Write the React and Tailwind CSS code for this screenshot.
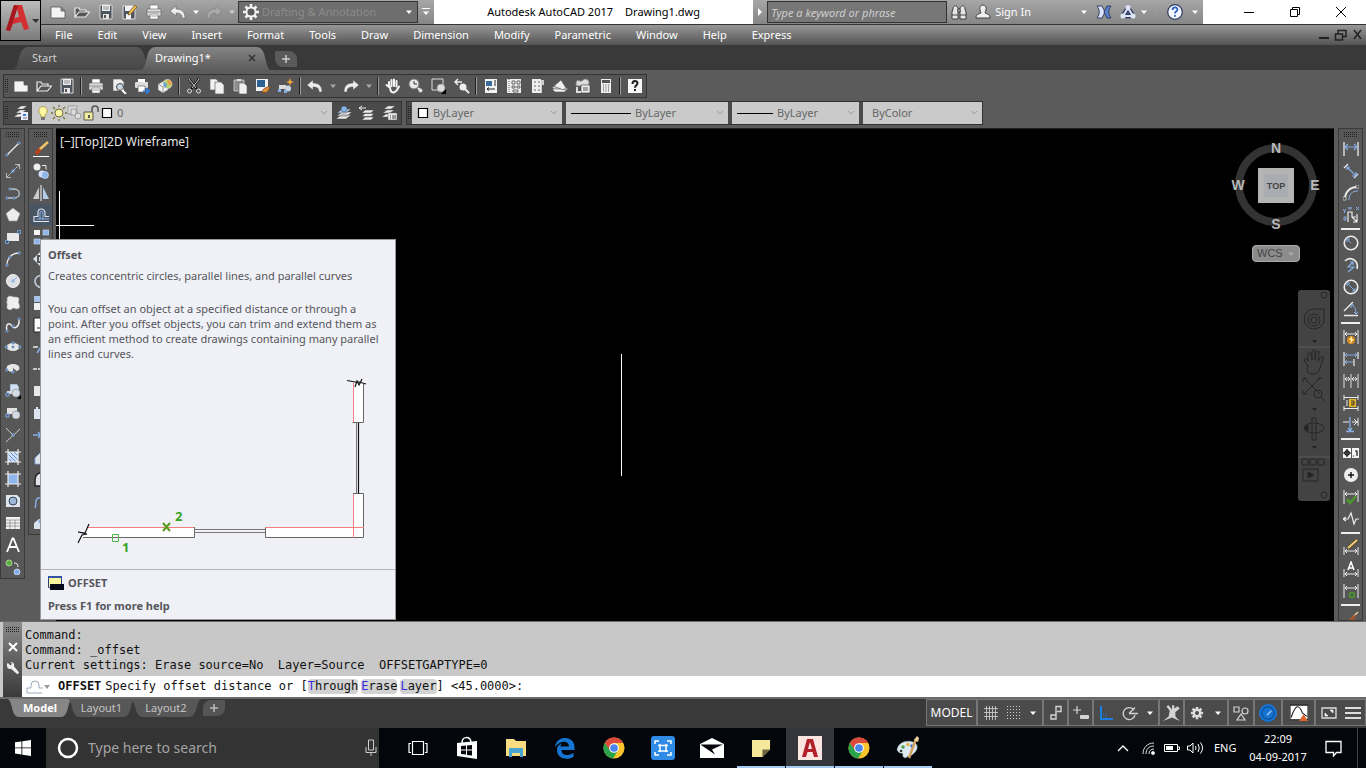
import React from 'react';

const L = '#ececec';
const B = '#86aee6';
const D = '#3a3a3a';

// All toolbar glyphs live on a 16x16 grid
const icons = {
  new: <path d="M1 3h10l4 4v7H1z M11 3v4h4" fill="#f4f4f4" stroke="#555" strokeWidth=".8" />,
  open: <path d="M1 13V4h4l1 2h6v2M1 13l4-5h10.5l-4 5z" fill="#555" stroke={L} strokeWidth="1.2" />,
  save: <g><path d="M2 1h12v14H2z" fill="#4d5560" stroke="#d5d5d5" /><path d="M4 1h8v6H4z" fill="#f2f2f2" /><path d="M5 10h6v5H5z" fill="#e5e5e5" /><path d="M6 11h2v3H6z" fill="#555" /><path d="M5 3h6M5 5h6" stroke="#888" /></g>,
  saveas: <g><path d="M1 2h12v13H1z" fill="#4d5560" stroke="#e0e0e0" /><path d="M3 2h8v5H3zM4 10h5v5H4z" fill="#f2f2f2" /><path d="M6 11l1-3 6-7 2 2-6 7z" fill="#f0bb52" stroke="#6b4a16" strokeWidth=".7" /></g>,
  print: <g><path d="M4 1h8v5H4z" fill="#fff" stroke="#666" strokeWidth=".6" /><rect x="1" y="5" width="14" height="7" rx="1" fill="#dedede" stroke="#555" strokeWidth=".6" /><path d="M1 8h14" stroke="#888" /><path d="M4 10h8v5H4z" fill="#fff" stroke="#666" strokeWidth=".6" /><path d="M5 12h6" stroke="#999" /></g>,
  preview: <g><path d="M2 1h8l3 3v9H2z" fill="#eee" stroke="#555" strokeWidth=".6" /><circle cx="9" cy="9" r="3.5" fill="#c9d4df" stroke="#444" /><path d="M11 12l4 4" stroke="#fff" strokeWidth="2" /></g>,
  publish: <g><path d="M4 1h7v4H4z" fill="#fff" /><rect x="1" y="4" width="13" height="6" rx="1" fill="#ddd" /><path d="M4 8h7v6H4z" fill="#fff" stroke="#555" strokeWidth=".6" /><path d="M9 13h6m-3-3l3 3-3 3" stroke="#2f7ee0" strokeWidth="1.6" fill="none" /></g>,
  cube: <g><path d="M1 6l6-3 4 2v7l-5 3-5-3z" fill="#f0f0f0" stroke="#666" strokeWidth=".6" /><path d="M6 9v6M1 6l5 3 5-3" stroke="#999" fill="none" /><circle cx="10.5" cy="6" r="4.5" fill="#b9d26a" stroke="#eee" strokeWidth=".6" /><path d="M10.5 1.5a4.5 4.5 0 0 1 4 6l-4-2z" fill="#e8a04c" /><path d="M7 4l3 2-1 4a4 4 0 0 1-2-6z" fill="#6a9fd8" /></g>,
  cut: <g fill="none"><path d="M3 1l8 10M13 1L5 11" stroke="#111" strokeWidth="2.2" /><path d="M3 1l7 9M13 1L6 10" stroke="#e8e8e8" strokeWidth=".9" /><circle cx="3.5" cy="13" r="2" stroke="#ddd" /><circle cx="12.5" cy="13" r="2" stroke="#ddd" /></g>,
  copy: <g fill="#f1f1f1" stroke="#666" strokeWidth=".7"><path d="M1 1h6l3 3v8H1z" /><path d="M6 4h6l3 3v9H6z" /></g>,
  paste: <g strokeWidth=".7"><path d="M2 2h10v11H2z" fill="#8d8d8d" stroke="#ddd" /><path d="M5 1h4v2H5z" fill="#ddd" /><path d="M7 5h5l3 3v8H7z" fill="#f1f1f1" stroke="#666" /></g>,
  match: <g><path d="M1 1h12v12H1z" fill="#f2f2f2" /><path d="M2 2h8v7H2z" fill="#2f6292" /><path d="M7 14c2-5 4-4 8-6-1 5-3 8-8 6z" fill="#d98d3a" stroke="#733c12" strokeWidth=".7" /></g>,
  block: <g><path d="M1 7h7v4H1z" fill="#ddd" /><circle cx="10" cy="10.5" r="3" fill="#ccd7e6" /><path d="M0 11h3v3H0zM6 12h3v3H6z" fill="#86aee6" /><path d="M12 0l1 3 3 1-3 1-1 3-1-3-3-1 3-1z" fill="#f5a938" /></g>,
  undo: <path d="M0 7l6-5v3c6 0 9 3 9 9h-3c0-4-2-5-6-5v3z" fill={L} stroke="#555" strokeWidth=".5" />,
  redo: <path d="M16 7l-6-5v3C4 5 1 8 1 14h3c0-4 2-5 6-5v3z" fill={L} stroke="#555" strokeWidth=".5" />,
  redoDim: <path d="M16 7l-6-5v3C4 5 1 8 1 14h3c0-4 2-5 6-5v3z" fill="#aaa" stroke="#777" strokeWidth=".5" />,
  pan: <path d="M4 9V4m2.5 4V2M9 8V1.5m2.5 7V3M4 9L1.5 7M5 9c0 4 1 5 3 5.5 3 0 4-2.5 6-6" fill="none" stroke="#f5f5f5" strokeWidth="2" strokeLinecap="round" />,
  zoom: <g><circle cx="6" cy="6" r="5" fill="#e9e9e9" stroke="#777" /><path d="M6 3v3h3" stroke="#333" fill="none" /><path d="M10 10l2 2" stroke="#eee" strokeWidth="2" /><circle cx="12.5" cy="12.5" r="2" fill="#ddd" /></g>,
  zoomwin: <g><path d="M1 1h11v11H1z" fill="none" stroke="#ddd" /><circle cx="10" cy="10" r="4" fill="#ddd" stroke="#888" strokeWidth=".6" /><path d="M15 11v5h-5z" fill="#000" /></g>,
  zoomprev: <g><path d="M1 4h7M4 1L1 4l3 3" stroke={L} fill="none" strokeWidth="1.5" /><circle cx="9" cy="9" r="3.5" fill="#eee" /><path d="M11 11l4 4" stroke={L} strokeWidth="2" /></g>,
  props: <g><path d="M2 1h12v14H2z" fill="#f3f3f3" /><path d="M3 3h6v5H3z" fill="#396b9a" /><path d="M11 3h2M11 5h2M11 7h2M4 11h8M6 9.5L4 11l2 1.500" stroke="#222" fill="none" /></g>,
  dc: <g><path d="M1 1h14v14H1z" fill="#eee" /><path d="M3 1v14" stroke="#666" strokeDasharray="1 1" /><path d="M6 3h3v3H6zM11 3h3v3h-3zM6 8h3v2H6zM11 8h3v2h-3zM7 12h5v2H7z" fill="none" stroke="#333" strokeWidth=".7" /></g>,
  palette: <g><path d="M3 1h9v14H3z" fill="#eee" /><path d="M12 2h3v5h-2v8h-1z" fill="#ccc" /><path d="M5 3h2v2H5zM9 3h2v2H9zM5 7h2v2H5zM9 7h2v2H9zM5 11h2v2H5zM9 11h2v2H9z" fill="#aaa" /></g>,
  sheet: <g stroke="#555" strokeWidth=".6"><path d="M0 9l8-3 8 5-4 3H4z" fill="#ccc" /><path d="M2 8l7-6 5 8-3 2z" fill="#eee" /><path d="M0 11h8l6 1-1 2H3z" fill="#f4f4f4" /></g>,
  markup: <g><path d="M1 4c2-4 4 1 7-2 2-2 4-1 6 1v5H1z" fill="#ddd" stroke="#777" /><path d="M6 7h9v8H6z" fill="#eee" stroke="#444" strokeWidth=".7" /><path d="M8 10h5M8 12h5" stroke="#555" /><path d="M2 9v5h4" stroke="#ddd" fill="none" strokeWidth="2" /></g>,
  calc: <g><path d="M3 1h10v14H3z" fill="#eee" /><path d="M4 2h8v3H4z" fill="#555" /><path d="M5 7h6M5 9h6M5 11h6M5 13h6" stroke="#555" strokeDasharray="1 1.5" strokeWidth="1.2" /></g>,
  help: <g><path d="M1 1h14v14H1z" fill="#f6f6f6" /><path d="M5.5 6c0-4 5-3.5 5-.8 0 2-2.5 2-2.5 4.500M8 11v2" fill="none" stroke="#222" strokeWidth="2" /></g>,
  layers: <g><path d="M4 4l4-3h6l-4 3zM3 8l4-3h6l-4 3zM1 12l4-3h6l-4 3z" fill={L} stroke="#555" strokeWidth=".4" /><path d="M8 7h7v8H8z" fill="#eef" /><path d="M10 9h3v2h-3z" fill="#3c7fc9" /><path d="M10 13h4" stroke="#777" /></g>,
  layersBlue: <g stroke="#444" strokeWidth=".5"><path d="M0 14l5-4h10l-5 4zM1 11l5-4h10l-5 4z" fill={L} /><path d="M1 8l5-4h9l-5 4z" fill="#a9cdf5" /><circle cx="8" cy="4" r="3" fill="#86b5ec" /></g>,
  layersBack: <g><path d="M3 8l3-3h9l-3 3zM3 11.500l3-3h9l-3 3zM3 15l3-3h9l-3 3z" fill={L} stroke="#444" strokeWidth=".5" /><path d="M0 3h7M3 1L0 3l3 2" stroke={L} fill="none" /></g>,
  layersState: <g><path d="M2 4l4-3h7L9 4zM1 8l4-3h7L8 8zM0 12l4-3h7l-4 3z" fill={L} stroke="#555" strokeWidth=".4" /><path d="M6 8h9v7H6z" fill="#eee" stroke="#555" strokeWidth=".5" /><path d="M8 11h1m1 0h4M8 13h1m1 0h4" stroke="#444" /></g>,
  bulb: <g><path d="M6 10C2 7 4 1.500 8 1.500s6 5.500 2 8.500v2H6z" fill="#fbf6a2" stroke="#a59133" strokeWidth=".8" /><path d="M6 12h4v3H6z" fill="#777" /></g>,
  sun: <g><circle cx="8" cy="8" r="4" fill="#fbf6a2" stroke="#6f6a3c" /><path d="M8 0v2M8 14v2M0 8h2M14 8h2M2 2l2 2M12 12l2 2M14 2l-2 2M4 12l-2 2" stroke="#777236" strokeWidth="1.3" /></g>,
  vp: <g fill="#ddd" stroke="#9a9a9a"><path d="M1 1h9v8H1z" /><path d="M4 4h5v6H4z" /><circle cx="11" cy="11" r="3" /></g>,
  unlock: <g><path d="M9 7V4c0-4 6-4 6 0v3" fill="none" stroke="#555" strokeWidth="1.5" /><path d="M1 7h9v8H1z" fill="#f2ec9c" stroke="#555" /><path d="M5 10h2v3H5z" fill="#555" /></g>,
  swatch: <path d="M3.5 3.5h9v9h-9z" fill="#fff" stroke="#000" strokeWidth="1.2" />,

  // draw
  line: <g><path d="M2 14L14 2" stroke={L} strokeWidth="1.3" /><path d="M1 13h2v2H1zM13 1h2v2h-2z" fill="#456" stroke={B} strokeWidth=".7" /></g>,
  xline: <g><path d="M1 15L15 1M10 1.500h4.500V6M1.500 10v4.500H6" stroke="#b8b8b8" fill="none" /><path d="M7 7h2v2H7z" fill="#456" stroke={B} /><path d="M5 11L11 5" stroke={B} strokeWidth=".7" /></g>,
  pline: <g><path d="M2 13h7c7 0 7-9 0-9H4" fill="none" stroke="#bcc7d4" strokeWidth="1.3" /><path d="M1 12h2v2H1zM8 12h2v2H8zM4 3h2v2H4z" fill="#456" stroke={B} strokeWidth=".7" /></g>,
  polygon: <path d="M8 1l7 5.5L12 14H4L1 6.500z" fill="#ececec" stroke="#999" strokeWidth=".6" />,
  rect: <g><path d="M2 4h12v8H2z" fill="#e9e9e9" /><path d="M.5 11.500h3v3h-3zM12.500 1.500h3v3h-3z" fill="#456" stroke={B} strokeWidth=".8" /></g>,
  arc: <g><path d="M2 14C2 7 7 2 14 2" fill="none" stroke={L} strokeWidth="1.3" /><path d="M1 13h2v2H1zM4 5h2v2H4zM13 1h2v2h-2z" fill="#456" stroke={B} strokeWidth=".8" /></g>,
  circle: <g><circle cx="8" cy="8" r="6.5" fill="#dde1e6" stroke="#f4f4f4" /><path d="M7 7h2v2H7zM9 7l3-3" fill="none" stroke={B} /></g>,
  cloud: <path d="M3 2c2-2 4 0 6 0s5 0 5 2-1 3 0 5 1 5-2 5-3-2-5 0-6 0-5-3-1-3 0-5-1-3 1-4z" fill="#eee" stroke="#aaa" strokeWidth=".6" />,
  spline: <g><path d="M2 14C0 5 5 6 7 9s8 2 7-7" fill="none" stroke={L} strokeWidth="1.5" /><path d="M1 13h2v2H1zM7 8h2v2H7zM13 1h2v2h-2z" fill="#456" stroke={B} strokeWidth=".7" /></g>,
  ellipse: <g><ellipse cx="8" cy="8" rx="6.5" ry="4" fill="#e6e6e6" /><path d="M.5 7h2v2h-2zM13.500 7h2v2h-2zM7 3h2v2H7zM7 7h2v2H7z" fill="#456" stroke={B} strokeWidth=".8" /></g>,
  earc: <g><ellipse cx="8" cy="7" rx="6.5" ry="4" fill="#e6e6e6" /><path d="M8 7l6 5H8z" fill="#5b5b5b" /><path d="M1 8h2v2H1zM7 10h2v2H7z" fill="#456" stroke={B} strokeWidth=".8" /></g>,
  insert: <g><path d="M5 1h7l2 3v5H5z" fill="#cfe0f5" stroke="#567" strokeWidth=".5" /><path d="M2 8h6v3H2z" fill="#ddd" /><circle cx="11" cy="10" r="4" fill="#d5dbe3" stroke="#777" strokeWidth=".5" /><path d="M1 10h3v3H1z" fill="#456" stroke={B} /><path d="M16 12v4h-4z" fill="#000" /></g>,
  mkblock: <g><path d="M2 3h10v6H2z" fill="#e2e2e2" /><circle cx="11" cy="10" r="4" fill="#d5dbe3" stroke="#777" strokeWidth=".5" /><path d="M1 9h3v3H1z" fill="#456" stroke={B} /></g>,
  point: <g><path d="M1 1l7 7M15 2L1 15" stroke="#ccc" /><path d="M7 7h2v2H7z" fill="#456" stroke={B} /></g>,
  hatch: <g><path d="M3 3h10v10H3z" fill="#cfe0f8" /><path d="M3 9l4 4M3 5l8 8M5 3l8 8M9 3l4 4" stroke="#5f8fd0" /><path d="M3 0v16M13 0v16M0 3h16M0 13h16" stroke={L} strokeWidth="1.2" /></g>,
  gradient: <g><path d="M3 3h10v10H3z" fill="#8fb7ee" /><path d="M3 0v16M13 0v16M0 3h16M0 13h16" stroke={L} strokeWidth="1.2" /></g>,
  region: <g><path d="M1 2h11l3 3v9H1z" fill="#dfe5ec" /><circle cx="8" cy="8" r="4" fill="#9fb7d4" stroke="#345" /></g>,
  table: <g><path d="M1 2h14v12H1z" fill="#f3f3f3" /><path d="M1 5h14M1 8h14M1 11h14M5 5v9M10 5v9" stroke="#888" strokeWidth=".8" /></g>,
  text: <path d="M2 15L7.500 1.500h1L14 15M4 10h8" fill="none" stroke="#fff" strokeWidth="1.8" />,
  addsel: <g><circle cx="4" cy="4" r="3" fill="#5cae3c" stroke="#cde8b8" strokeWidth=".7" /><circle cx="12" cy="13" r="3" fill="#86aee6" stroke="#e0ecff" strokeWidth=".7" /><path d="M9 4c3 0 4 1 4 4" stroke={L} fill="none" /></g>,

  // modify
  erase: <g><path d="M15 1L6 9" stroke="#f1c46a" strokeWidth="2.5" /><path d="M7 8L3 13" stroke="#b4421c" strokeWidth="4" /><path d="M0 15.500h16" stroke="#fff" /></g>,
  copyobj: <g><circle cx="4" cy="4" r="3.5" fill="#eee" /><path d="M9 2.500h4v4" fill="none" stroke={L} /><circle cx="9" cy="11" r="3.5" fill="#cfe0f8" /><circle cx="12" cy="12" r="3.5" fill="#8fb4e8" stroke="#dbe8fb" strokeWidth=".6" /></g>,
  mirror: <g><path d="M6 2v12H0z" fill="#ccc" /><path d="M10 2v12h6z" fill="#b5cbe8" /><path d="M8 0v16" stroke="#fff" /></g>,
  offset: <g fill="none" strokeWidth="1.1"><path d="M16 14.500H1v-5h4V5.500a3.500 3.500 0 0 1 7 0v4h4" stroke="#dfe8f5" /><path d="M16 12H3.500M7 12V6a1.500 1.500 0 0 1 3 0v6" stroke={B} /></g>,
  array: <g><path d="M1 1h6v5H1z" fill="#f4f4f4" /><path d="M10 1h6v5h-6zM1 10h6v5H1zM10 10h6v5h-6z" fill="#8fb4e8" stroke="#cfe0f8" strokeWidth=".6" /></g>,
  move: <path d="M0 8l4-4v8zM8 0l4 4H4zM16 8l-4 4V4zM8 16l-4-4h8zM6 6h4v4H6z" fill="#d9dee6" />,
  rotate: <path d="M13 5A6 6 0 1 0 14 9M14 1v5H9" fill="none" stroke="#bcc7d4" strokeWidth="1.7" />,
  scale: <g><path d="M1 1h14v6H1z" fill="#a9c3e6" /><path d="M1 8h14v7H1z" fill="#f0f0f0" /></g>,
  stretch: <g><path d="M1 1h14v14H1z" fill="#fff" stroke="#222" /><path d="M4 11h6" stroke="#222" /></g>,
  trim: <g><path d="M0 8h5" stroke={L} strokeWidth="1.5" /><path d="M4 14L12 2" stroke={B} strokeWidth="1.5" /></g>,
  extend: <path d="M0 8h4m1 0h3m3 0h4" stroke={L} strokeWidth="1.5" />,
  brk: <path d="M1 3h14v10H1z" fill="#e8e8e8" />,
  brk2: <path d="M1 4h2V2h2v2h10v10H1z" fill="#dbe4f0" />,
  join: <path d="M0 8h8M5 5l3 3-3 3" stroke={B} strokeWidth="1.5" fill="none" />,
  chamfer: <path d="M2 15V9l8-8h5v14z" fill="#dfe2e6" stroke={B} strokeWidth=".8" />,
  fillet: <path d="M2 15V9q0-8 10-8h3v14z" fill="#dfe2e6" stroke="#222" strokeWidth="1.5" />,
  blend: <path d="M2 15c2-3-1-8 3-10h8" fill="none" stroke={B} strokeWidth="1.5" />,
  explode: <g><path d="M1 8l5-4h8v10H1z" fill="#d9e3f0" /><path d="M5 6l4-4v10z" fill="#8fb4e8" /></g>,

  // dimension
  dlin: <g><path d="M1 1v14M15 1v14" stroke={L} strokeWidth="1.3" /><path d="M2 6h12M5 3L2 6l3 3M11 3l3 3-3 3" fill="none" stroke={B} strokeWidth="1.2" /></g>,
  dali: <g><path d="M1 5l4-4M11 15l4-4" stroke={L} strokeWidth="1.3" /><path d="M4 4l9 9M4 7V4h3M9 13h4V9" fill="none" stroke={B} strokeWidth="1.2" /></g>,
  darc: <g><path d="M2 14C2 7 7 2 14 2" fill="none" stroke={L} strokeWidth="2" /><path d="M6 15c0-6 3-9 9-9" fill="none" stroke={B} /><path d="M0 12h3v3H0zM13 0h3v3h-3z" fill={D} stroke={L} strokeWidth=".7" /></g>,
  dord: <g><path d="M5 15V5h4v5h4M9 10l5 5M14 7v8h-4" fill="none" stroke={L} strokeWidth="1.2" /><path d="M0 2l1.500 2L3 2M1.500 4v2M13 0l3 3M16 0l-3 3M1 10h2v3H1zM6 0h2v2H6z" fill="none" stroke={B} /></g>,
  drad: <g><circle cx="8" cy="8" r="6.8" fill="none" stroke={L} strokeWidth="1.6" /><path d="M4 4l4 4M4 7V4h3" fill="none" stroke={B} /></g>,
  djog: <g><path d="M2 4c5-5 14-1 12 8" fill="none" stroke={L} strokeWidth="1.6" /><path d="M10 5L5 10h6L5 15M7 5h3v3" fill="none" stroke={B} strokeWidth="1.2" /></g>,
  ddia: <g><circle cx="8" cy="8" r="6.8" fill="none" stroke={L} strokeWidth="1.6" /><path d="M4 4l8 8M4 7V4h3M9 12h3V9" fill="none" stroke={B} /></g>,
  dang: <g><path d="M10 1L1 10M1 14.500h14" fill="none" stroke={L} strokeWidth="1.4" /><path d="M9 4c3 2 4 5 4 9M8 7V4h3M11 11l2 2 2-2" fill="none" stroke={B} /></g>,
  dquick: <g><path d="M1 1v14M15 1v14M2 5h12M4 3L2 5l2 2M12 3l2 2-2 2" fill="none" stroke={L} /><circle cx="8" cy="11" r="4" fill="#d98a20" /><path d="M9 7l-3 4h2l-1 4 4-5H9z" fill="#fff3b0" /></g>,
  dbase: <g><path d="M1 1v14M11 8v7M15 1v7" stroke={L} strokeWidth="1.2" /><path d="M2 4h12M2 11h8M4 2L2 4l2 2M4 9l-2 2 2 2M12 2l2 2-2 2" stroke={B} fill="none" /></g>,
  dcont: <path d="M1 1v14M8 1v14M15 1v14M2 6h5M9 6h5M4 4L2 6l2 2M12 4l2 2-2 2M5 4l2 2-2 2M11 4L9 6l2 2" fill="none" stroke={L} strokeWidth=".9" />,
  dspace: <g><path d="M1 0v5M15 0v5M1 11v5M15 11v5M1 2.500h14M1 13.500h14M4 5v6" stroke={L} fill="none" /><path d="M6 4h7v8H6z" fill="#e7b92d" /><path d="M8 6h3v4H8M8 8h3" stroke="#433" fill="none" /></g>,
  dbreak: <g><path d="M0 5h6M9 5h6M11 2l3 3-3 3M15 1v8" stroke={L} fill="none" /><path d="M7 0v13M3 14.500h8M5 11l2 3 2-3" stroke={B} fill="none" strokeWidth="1.3" /></g>,
  dtol: <g><path d="M0 3h8v10H0zM9 3h7v10H9z" fill="#f4f4f4" /><circle cx="4" cy="8" r="2.2" fill="none" stroke="#111" strokeWidth="1.2" /><path d="M4 4v8M0 8h8M10 11h1M12 6h2v5" stroke="#111" strokeWidth="1.2" fill="none" /></g>,
  dcen: <g><circle cx="8" cy="8" r="7" fill="#eee" /><path d="M8 5v6M5 8h6" stroke="#111" strokeWidth="1.4" /></g>,
  dinsp: <g><path d="M1 1v14M15 1v12M2 5h12M4 3L2 5l2 2M12 3l2 2-2 2" fill="none" stroke={L} /><path d="M4 10l3 4 6-7" fill="none" stroke="#4c9a2b" strokeWidth="2.5" /></g>,
  djogl: <path d="M0 8h5l3-6 3 11 2-5h3M3 6L0 8l3 2" fill="none" stroke={L} strokeWidth="1.2" />,
  dedit: <g><path d="M1 8v8M15 8v8M2 12h12M4 10l-2 2 2 2M12 10l2 2-2 2" fill="none" stroke={L} /><path d="M5 9l9-8" stroke="#5e451a" strokeWidth="3.4" /><path d="M5 9l9-8" stroke="#f2cf7c" strokeWidth="2" /></g>,
  dtedit: <g><path d="M1 8v8M15 8v8M2 13h12M4 11l-2 2 2 2M12 11l2 2-2 2" fill="none" stroke={L} /><path d="M5 9l3-8 3 8M6 7h4" fill="none" stroke="#fff" strokeWidth="1.5" /></g>,
  dupd: <g><path d="M1 1v14M15 1v14M2 5h12M4 3L2 5l2 2M12 3l2 2-2 2" fill="none" stroke={L} /><circle cx="9" cy="12" r="2.5" fill="none" stroke="#4c9a2b" strokeWidth="1.6" /></g>,
  dstyle: <g><path d="M15 1L7 9" stroke="#e8cf9a" strokeWidth="1.5" /><path d="M13 4c-3 0-6 3-9 8 5 0 8-2 9-8z" fill="#a0522d" /><path d="M1 9v6M15 9v6" stroke={L} /></g>,

  // status bar
  grid: <path d="M3.500 1v14M6.500 1v14M9.500 1v14M12.500 1v14M1 3.500h14M1 7.500h14M1 11.500h14" stroke="#d4d4d4" strokeWidth=".8" />,
  snap: <path d="M1 1.500h14M1 4.500h14M1 7.500h14M1 10.500h14M1 13.500h14" stroke="#cfcfcf" strokeDasharray="1 2" />,
  infer: <path d="M8 13V1.500h5v5H9M3 10h5v4H3z" fill="none" stroke="#d4d4d4" strokeWidth="1.4" />,
  dyn: <g><path d="M4 1v8M0 5h8" stroke="#d4d4d4" strokeWidth="1.2" /><rect x="7" y="10" width="9" height="4" rx="1" fill="#d4d4d4" /></g>,
  ortho: <g><path d="M3 1v13h12" fill="none" stroke="#1d7fe0" strokeWidth="2" /><path d="M3 9h5v5" fill="none" stroke="#1d7fe0" strokeDasharray="1 1" /></g>,
  polar: <g fill="none" stroke="#d4d4d4" strokeWidth="1.3"><path d="M12 5a6 6 0 1 0 1 5" /><path d="M7 8.500l6-6M7 8.500h9" /></g>,
  iso: <path d="M0 15l5-4 1-5-3-4 2-1 3 4V1h2v3l3-2 2 2-4 3v4l4 4-7-3z" fill="#d4d4d4" />,
  gear: <g><path d="M8 1v14M1 8h14M3 3l10 10M13 3L3 13" stroke="#dcdcdc" strokeWidth="3" /><circle cx="8" cy="8" r="5" fill="#dcdcdc" /><circle cx="8" cy="8" r="2.2" fill="#4b4b4b" /></g>,
  gearOpen: <g><path d="M8 0v16M0 8h16M2.500 2.500l11 11M13.500 2.500l-11 11" stroke="#f4f4f4" strokeWidth="2.6" /><circle cx="8" cy="8" r="5.500" fill="#f4f4f4" /><circle cx="8" cy="8" r="3.600" fill="#5c5c5c" /></g>,
  shapes: <g fill="none" stroke="#d4d4d4" strokeWidth="1.2"><path d="M1 2h5v5H1zM8 9l4 6H4z" /><circle cx="12" cy="6" r="3" /></g>,
  perf: <g><circle cx="8" cy="8" r="8" fill="#1673cf" /><circle cx="8" cy="8" r="5.5" fill="none" stroke="#0c4f93" /><path d="M7 10l4-4" stroke="#9cc6f2" strokeWidth="1.3" /></g>,
  graph: <g><path d="M0 1h16v13H0z" fill="#fff" stroke="#222" /><path d="M1 12C5 0 8 0 11 8l4 3" fill="none" stroke="#222" /><path d="M12 9l4 6H8z" fill="#d9622b" /></g>,
  full: <g><path d="M1 3h14v10H1z" fill="none" stroke="#ddd" strokeWidth="1.3" /><path d="M4 8v3h3zM12 8V5H9z" fill="#eee" stroke="#eee" strokeWidth=".8" /></g>,
  menu: <path d="M0 3h16M0 8h16M0 13h16" stroke="#ddd" strokeWidth="1.8" />,

  binoc: <g fill="#e6e6e6" stroke="#333" strokeWidth=".9"><path d="M2 5c0-4 4-4 5-1v11H1V8zM14 5c0-4-4-4-5-1v11h6V8z" /><path d="M1 11h6M9 11h6M7 5h2v3H7z" /></g>,
  user: <path d="M8 1C5 1 4.500 4 5 6c.5 2 1 2 1 3-2 1-5 1-5 5h14c0-4-3-4-5-5 0-1 .5-1 1-3 .5-2 0-5-3-5z" fill="#eee" stroke="#333" strokeWidth=".9" />,
  exchange: <g strokeWidth=".9" stroke="#27355c"><path d="M1 2h5l3 6-3 6H1c3-4 3-8 0-12z" fill="#dce6fa" /><path d="M15 2h-4L8 8l3 6h4c-3-4-3-8 0-12z" fill="#5c83cf" /></g>,
  a360: <g fill="none" stroke="#dfe6f5" strokeWidth="2"><path d="M8 4L3 12h10z" stroke="#2c3860" strokeWidth="4.5" strokeLinejoin="round" /><path d="M8 4L3 12h10z" /><circle cx="8" cy="3.5" r="1.600" /><circle cx="3" cy="12" r="1.600" /><circle cx="13" cy="12" r="1.600" /></g>,
  helpCircle: <g><circle cx="8" cy="8" r="7.3" fill="#f5f8ff" stroke="#2c3860" strokeWidth="1.2" /><path d="M5.5 6c0-3.5 5-3.2 5-.6 0 1.800-2.500 1.800-2.500 4M8 11v1.800" fill="none" stroke="#2c62c4" strokeWidth="1.8" /></g>,
  wrench: <path d="M2 2l3 3 2-2-2-2c4 0 5 3 4 5l6 7-2 2-7-6c-3 1-5-1-5-5z" fill="#eee" />,
};

const Icon = ({ name, size = 'size-4' }) => (
  <svg viewBox="0 0 16 16" className={`${size} shrink-0`} aria-hidden="true">{icons[name]}</svg>
);

const Caret = ({ color = '#fff' }) => (
  <svg viewBox="0 0 8 8" className="size-2 shrink-0" aria-hidden="true"><path d="M1 2.500h6L4 6z" fill={color} /></svg>
);

const Grip = ({ wide }) => wide ? (
  <svg viewBox="0 0 14 6" className="h-[6px] w-[14px] shrink-0" aria-hidden="true">
    <path d="M0 .5h14M0 2.500h14M0 4.500h14" stroke="#222" strokeDasharray="1 1" />
  </svg>
) : (
  <svg viewBox="0 0 3 14" className="mx-px h-[14px] w-[3px] shrink-0" aria-hidden="true">
    <path d="M.5 0v14M2.500 0v14" stroke="#222" strokeDasharray="1 1" />
  </svg>
);

const stdBar = ['new', 'open', 'save', '|', 'print', 'preview', 'publish', 'cube', '|', 'cut', 'copy', 'paste', 'match', 'block', '|',
  'undo', 'v', 'redo', 'v', '|', 'pan', 'zoom', 'zoomwin', 'zoomprev', '|', 'props', 'dc', 'palette', 'sheet', 'markup', 'calc', '|', 'help'];
const drawBar = ['line', 'xline', 'pline', 'polygon', 'rect', 'arc', 'circle', 'cloud', 'spline', 'ellipse', 'earc', 'insert', 'mkblock', 'point', 'hatch', 'gradient', 'region', 'table', 'text', 'addsel'];
const modifyBar = ['erase', 'copyobj', 'mirror', 'offset', 'array', 'move', 'rotate', 'scale', 'stretch', 'trim', 'extend', 'brk', 'brk2', 'join', 'chamfer', 'fillet', 'blend', 'explode'];
const dimBar = ['dlin', 'dali', 'darc', 'dord', '|', 'drad', 'djog', 'ddia', 'dang', '|', 'dquick', 'dbase', 'dcont', 'dspace', 'dbreak', '|', 'dtol', 'dcen', 'dinsp', 'djogl', '|', 'dedit', 'dtedit', 'dupd', '|', 'dstyle'];
const menus = ['File', 'Edit', 'View', 'Insert', 'Format', 'Tools', 'Draw', 'Dimension', 'Modify', 'Parametric', 'Window', 'Help', 'Express'];

const IconButton = ({ name, className = 'h-6 w-6' }) => (
  <button type="button" aria-label={name} className={`flex shrink-0 items-center justify-center ${className}`}>
    <Icon name={name} />
  </button>
);

const TitleBar = () => (
  <div className="flex h-[25px] items-stretch border-b border-[#333] bg-white">
    <div className="flex items-center bg-linear-to-b from-[#a6a6a6] to-[#868686] pl-[5px]">
      {['new', 'open', 'save', 'saveas', 'print', 'undo'].map((n) => <IconButton key={n} name={n} />)}
      <span className="flex w-3 justify-center"><Caret /></span>
      <IconButton name="redoDim" />
      <span className="flex w-3 justify-center"><Caret color="#ccc" /></span>
      <div className="flex h-[22px] w-[180px] items-center border border-[#333] bg-[#6e6e6e] px-1">
        <Icon name="gearOpen" />
        <select aria-label="Workspace" className="min-w-0 flex-1 appearance-none bg-transparent pl-[3px] text-[11px] text-[#8c8c8c]">
          <option>Drafting &amp; Annotation</option>
        </select>
        <Caret />
      </div>
      <button type="button" aria-label="Customize" className="flex w-4 flex-col items-center">
        <span className="h-px w-2 bg-white" />
        <Caret />
      </button>
    </div>
    <div className="flex flex-1 items-center justify-center gap-3 text-[11px] text-black">
      <span>Autodesk AutoCAD 2017</span>
      <span>Drawing1.dwg</span>
    </div>
    <div className="flex items-center bg-linear-to-b from-[#a6a6a6] to-[#868686]">
      <button type="button" aria-label="Collapse search" className="flex w-[14px] justify-center">
        <svg viewBox="0 0 8 8" className="size-2"><path d="M2 0l4 4-4 4z" fill="#fff" /></svg>
      </button>
      <input aria-label="Search help" placeholder="Type a keyword or phrase" className="h-[22px] w-[180px] border border-[#333] bg-[#777] px-[3px] text-[11px] italic placeholder:text-[#cfcfcf]" />
      <IconButton name="binoc" />
      <button type="button" className="flex items-center gap-1 pl-1 text-[11px] text-white">
        <Icon name="user" />Sign In
      </button>
      <span className="ml-[47px] flex w-3 justify-center"><Caret /></span>
      <IconButton name="exchange" className="ml-[2px] h-6 w-6" />
      <IconButton name="a360" />
      <Caret />
      <span className="ml-2 h-3 w-px bg-[#999]" />
      <IconButton name="helpCircle" className="ml-[6px] h-6 w-6" />
      <span className="flex w-4 justify-center"><Caret /></span>
    </div>
    <div className="mr-[2px] ml-[23px] flex text-black">
      {[['Minimize', 'M0 5.500h10'], ['Restore', 'M.5 2.500h7v7h-7zM2.500 2.500v-2h7v7h-2'], ['Close', 'M0 0l10 10M10 0L0 10']].map(([n, d]) => (
        <button key={n} type="button" aria-label={n} className="flex w-[46px] items-center justify-center">
          <svg viewBox="0 0 10 10" className="size-[10px]"><path d={d} fill="none" stroke="currentColor" /></svg>
        </button>
      ))}
    </div>
  </div>
);

const MenuBar = () => (
  <nav className="flex h-5 items-center gap-px bg-linear-to-b from-[#989898] to-[#545454] pl-[2px] text-[11px] text-white">
    {menus.map((m) => <button key={m} type="button" className="px-3">{m}</button>)}
    <span className="flex-1" />
    <svg viewBox="0 0 44 12" className="mr-1 h-3 w-11" fill="none" stroke="#222" strokeWidth="1.5" aria-hidden="true">
      <path d="M1 9h10" strokeWidth="2" />
      <path d="M17.500 5h7v6h-7zM20 4.500V1.500h8v6h-3M36 1l7 9M43 1l-7 9" />
    </svg>
  </nav>
);

const FileTab = ({ active, children, className }) => (
  <div className={`relative flex h-6 items-center text-[11px] ${className}`}>
    <svg viewBox="0 0 130 24" preserveAspectRatio="none" className="absolute inset-0 h-full w-full" aria-hidden="true">
      <defs>
        <linearGradient id={active ? 'tabOn' : 'tabOff'} x1="0" y1="0" x2="0" y2="1">
          <stop offset="0" stopColor={active ? '#858585' : '#585858'} />
          <stop offset="1" stopColor={active ? '#5c5c5c' : '#474747'} />
        </linearGradient>
      </defs>
      <path d="M0 24c6-5 3-23 14-23h102c11 0 8 18 14 23z" fill={active ? 'url(#tabOn)' : 'url(#tabOff)'} />
    </svg>
    {children}
  </div>
);

const DocTabs = () => (
  <div className="flex h-[25px] items-end bg-[#393939] pl-[14px]">
    <FileTab className="w-[136px] pl-[18px] text-[#d0d0d0]"><button type="button" className="relative">Start</button></FileTab>
    <FileTab active className="-ml-2 w-[128px] justify-between pr-[14px] pl-[13px] text-white">
      <button type="button" className="relative">Drawing1*</button>
      <button type="button" aria-label="Close tab" className="relative">
        <svg viewBox="0 0 8 8" className="size-2"><path d="M1 1l6 6M7 1L1 7" stroke="#333" strokeWidth="1.5" /></svg>
      </button>
    </FileTab>
    <button type="button" aria-label="New tab" className="mb-[3px] ml-[5px] flex h-4 w-[22px] items-center justify-center rounded-tr-lg rounded-bl-lg bg-[#5a5a5a]">
      <svg viewBox="0 0 8 8" className="size-2"><path d="M4 0v8M0 4h8" stroke="#ccc" strokeWidth="1.5" /></svg>
    </button>
  </div>
);

const Combo = ({ label, value, children, className }) => (
  <div className={`flex h-[22px] shrink-0 items-center bg-[#cacaca] pr-1 pl-[3px] text-[11px] text-[#666] ${className}`}>
    {children}
    <select aria-label={label} className="min-w-0 flex-1 appearance-none bg-transparent pl-[2px]">
      <option>{value}</option>
    </select>
    <svg viewBox="0 0 8 8" className="size-2 shrink-0" aria-hidden="true"><path d="M1 2l3 3 3-3" fill="none" stroke="#999" /></svg>
  </div>
);

const Toolbars = () => (
  <div className="flex flex-col gap-[3px] bg-[#5b5b5b] px-[3px] pt-1 pb-[3px]">
    <div className="flex h-6 w-fit items-center border border-[#333] bg-[#555]">
      <Grip />
      {stdBar.map((n, i) => {
        if (n === '|') return <span key={i} className="mx-[2px] h-[18px] w-[2px] border-l border-[#222] bg-[#999]" />;
        if (n === 'v') return <span key={i} className="flex w-[13px] justify-center"><Caret color="#aaa" /></span>;
        return <IconButton key={i} name={n} className="h-[22px] w-[23px]" />;
      })}
    </div>
    <div className="flex items-stretch">
      <div className="flex h-6 items-center border border-[#333] bg-[#4a4a4a]">
        <Grip />
        <IconButton name="layers" className="h-[22px] w-[23px]" />
        <Combo label="Layer" value="0" className="w-[300px]">
          {['bulb', 'sun', 'vp', 'unlock', 'swatch'].map((n) => <Icon key={n} name={n} />)}
        </Combo>
        {['layersBlue', 'layersBack', 'layersState'].map((n) => <IconButton key={n} name={n} className="h-[22px] w-[23px]" />)}
      </div>
      <div className="ml-1 flex h-6 items-center gap-1 border border-[#333] bg-[#4a4a4a]">
        <div className="flex items-center">
          <Grip />
          <Combo label="Color" value="ByLayer" className="w-[150px]"><Icon name="swatch" /></Combo>
        </div>
        <Combo label="Linetype" value="ByLayer" className="w-[162px]">
          <span className="mx-[2px] h-px w-[60px] bg-black" />
        </Combo>
        <Combo label="Lineweight" value="ByLayer" className="w-[127px]">
          <span className="mx-[2px] h-px w-9 bg-black" />
        </Combo>
        <Combo label="Plot style" value="ByColor" className="w-[119px]">
          <span className="w-1" />
        </Combo>
      </div>
    </div>
  </div>
);

const SideBar = ({ items, className = '' }) => (
  <div className={`flex w-[25px] shrink-0 flex-col items-center overflow-hidden border border-[#3a3a3a] bg-[#575757] pt-[3px] ${className}`}>
    <Grip wide />
    {items.map((n, i) => n === '|'
      ? <span key={i} className="my-[2px] h-[2px] w-[19px] shrink-0 bg-[#eee]" />
      : <IconButton key={i} name={n} className={n === 'offset' ? 'h-[22px] w-[22px] bg-[#4a5563]' : 'h-[22px] w-[22px]'} />)}
  </div>
);

const OffsetTip = () => (
  <div role="tooltip" className="absolute top-[111px] left-10 flex h-[381px] w-[356px] flex-col border border-[#999] bg-[#f0f1f6] text-[11px] text-[#55565c]">
    <div className="px-[7px] pt-[6px]">
      <h2 className="leading-[18px] font-bold">Offset</h2>
      <p className="mt-1 leading-4">Creates concentric circles, parallel lines, and parallel curves</p>
      <p className="mt-[17px] pr-1 leading-[15px]">
        You can offset an object at a specified distance or through a point. After you offset objects, you can trim and extend them as an efficient method to create drawings containing many parallel lines and curves.
      </p>
    </div>
    <svg viewBox="41 370 354 190" className="mt-auto h-[190px] w-full font-bold" fill="none" aria-hidden="true">
      <path d="M86 527h108v11H82zM265 527h99v11h-99zM353 383h11v40h-11zM353 494h11v44h-11z" fill="#fff" />
      <path d="M83 537.500h111.500V527M265.500 527v10.500h98V493.500h-10.500M363.500 384v38.500h-11" stroke="#666" />
      <path d="M88 527.500h106M265 527.500h99M353.500 383v39.500M353.500 494v44" stroke="#f08080" />
      <path d="M194 529.500h71M194 532.500h71M356.500 423v70.500" stroke="#777" />
      <path d="M358.500 423v70.500M347 380.500l8 1.500h4l7 2M355 387l2-6 2 4 3-6M89 524l-4 9M85 533l-7-1 9 2-5 1-4 8" stroke="#111" strokeWidth="1.2" />
      <path d="M112.500 534.500h6v7h-6z" stroke="#4db748" />
      <path d="M163 523l7 8M170 523l-7 8" stroke="#5a9a1c" strokeWidth="2" />
      <text x="122" y="552" fill="#38a424" fontSize="13">1</text>
      <text x="175" y="521" fill="#38a424" fontSize="13">2</text>
    </svg>
    <div className="mt-[9px] border-t border-[#b5b5b5] px-[7px] pt-1 pb-1 font-bold">
      <div className="flex h-[18px] items-center gap-1">
        <svg viewBox="0 0 16 16" className="size-4" aria-hidden="true">
          <path d="M.5 1.500h13v11H.5z" fill="#f8f7a0" stroke="#2c3f78" /><path d="M0 1h14v2H0z" fill="#3352a8" /><path d="M2 9h14v6H2z" fill="#0a0a18" />
        </svg>
        <span>OFFSET</span>
      </div>
      <p className="mt-[5px] leading-[18px]">Press F1 for more help</p>
    </div>
  </div>
);

const ViewCube = () => (
  <div className="absolute top-[11px] right-[13px] flex w-[90px] flex-col items-center">
    <svg viewBox="0 0 90 94" className="h-[94px] w-[90px] font-['Liberation_Sans'] font-bold" aria-label="View cube">
      <circle cx="45" cy="45" r="37" fill="none" stroke="#333" strokeWidth="8" />
      <path d="M27 28h36v35H27z" fill="#b4b4b4" />
      <path d="M33 34h24v23H33z" fill="#a9adb2" />
      <g fill="#b8b8b8" fontSize="14" textAnchor="middle">
        <text x="45" y="13">N</text><text x="45" y="89">S</text><text x="7" y="50">W</text><text x="84" y="50">E</text>
      </g>
      <text x="45" y="49" fill="#444" fontSize="9" textAnchor="middle">TOP</text>
    </svg>
    <button type="button" className="mt-[11px] flex h-[17px] w-12 items-center justify-between rounded border border-[#aaa] bg-[#8c8c8c] px-1 font-['Liberation_Sans'] text-[11px] text-[#444]">
      WCS<Caret color="#aaa" />
    </button>
  </div>
);

const NavBar = () => (
  <svg viewBox="0 0 32 211" className="absolute top-[161px] right-1 h-[211px] w-8" fill="none" stroke="#262626" aria-label="Navigation bar">
    <rect width="32" height="211" rx="3" fill="#434343" stroke="none" />
    <circle cx="26" cy="5" r="3" /><circle cx="26" cy="205" r="3" />
    <path d="M16 19h10v12a10 10 0 1 1-10-12z" /><circle cx="16" cy="30" r="6" /><circle cx="16" cy="30" r="3" />
    <path d="M0 57h32M0 167h32" stroke="#5a5a5a" />
    <path d="M14 50h5l-2.500 3zM14 118h5l-2.500 3zM14 156h5l-2.500 3z" fill="#222" stroke="none" />
    <path d="M10 76l-4-6c0-3 3-1 4 1V64c1-2 3-1 3 0l1 6V61c1-2 3-1 3 0v9l1-8c1-2 3-1 3 0l-1 9 3-4c2-1 3 0 2 2l-4 12c-2 4-10 4-12 0z" />
    <path d="M6 88l16 16M22 88L6 104M5 88h4M5 88v4M24 88h-4M5 104h4M5 104v-4" /><circle cx="20" cy="104" r="4" /><path d="M23 107l4 4" />
    <path d="M14 128h4v22h-4z" /><ellipse cx="16" cy="138" rx="10" ry="5" /><path d="M6 138l4-3v6z" fill="#222" />
    <path d="M4 169h6v6H4zM12 169h6v6h-6zM20 169h6v6h-6zM5 179h15v12H5z" /><path d="M10 182l6 3-6 3z" fill="#222" />
  </svg>
);

const Workspace = () => (
  <div className="relative flex min-h-0 flex-1 bg-[#5b5b5b]">
    <SideBar items={drawBar} className="mb-auto" />
    <SideBar items={modifyBar} className="mr-[3px] mb-auto ml-[3px]" />
    <div className="relative flex-1 overflow-hidden border-t border-[#222] bg-black">
      <button type="button" className="absolute top-[5px] left-1 text-xs text-[#e6e6e6]">[−][Top][2D Wireframe]</button>
      <svg className="h-full w-full" aria-hidden="true">
        <path d="M3.500 62v60M0 96.500h38" stroke="#fff" />
        <path d="M565.500 225v122" stroke="#fff" />
      </svg>
      <ViewCube />
      <NavBar />
    </div>
    <SideBar items={dimBar} className="mr-[3px] ml-1" />
    <OffsetTip />
  </div>
);

const Option = ({ k, rest }) => (
  <button type="button" className="mr-[3px] rounded-sm bg-[#d2d2d2]"><span className="text-[#3a2be0]">{k}</span>{rest}</button>
);

const CommandLine = () => (
  <div className="flex border-t border-b-2 border-[#6a6a6a] bg-[#c8c8c8] font-['DejaVu_Sans_Mono',monospace] text-xs leading-[15px] text-[#111]">
    <div className="ml-[3px] flex w-[19px] shrink-0 flex-col items-center gap-[9px] bg-linear-to-b from-[#8a8a8a] to-[#3a3a3a] pt-[5px]">
      <Grip wide />
      <button type="button" aria-label="Close command line" className="h-[10px]">
        <svg viewBox="0 0 10 10" className="size-[10px]"><path d="M1 1l8 8M9 1L1 9" stroke="#fff" strokeWidth="2" /></svg>
      </button>
      <button type="button" aria-label="Customize command line" className="h-[14px]"><Icon name="wrench" size="size-[14px]" /></button>
    </div>
    <div className="min-w-0 flex-1">
      <pre className="px-[3px] pt-[6px] pb-[3px] font-['DejaVu_Sans_Mono',monospace]">{`Command:
Command: _offset
Current settings: Erase source=No  Layer=Source  OFFSETGAPTYPE=0`}</pre>
      <div className="flex h-[21px] items-center bg-white pl-1">
        <svg viewBox="0 0 26 16" className="mr-[6px] h-4 w-[26px] shrink-0" aria-hidden="true">
          <path d="M16 14H1V9h4V6a4 4 0 0 1 8 0v3h4" fill="none" stroke="#9aabbd" /><path d="M18 6h6l-3 4z" fill="#999" />
        </svg>
        <span className="font-bold">OFFSET</span>
        <label htmlFor="cmd" className="ml-1 whitespace-pre">Specify offset distance or [</label>
        <Option k="T" rest="hrough" /><Option k="E" rest="rase" /><Option k="L" rest="ayer" />
        <span className="-ml-[3px] whitespace-pre">] &lt;45.0000&gt;:</span>
        <input id="cmd" className="min-w-0 flex-1 bg-transparent px-1 outline-none" />
      </div>
    </div>
  </div>
);

const LayoutTab = ({ active, children, className }) => (
  <button type="button" className={`relative flex h-[18px] items-center justify-center text-[11px] ${active ? 'font-bold text-white' : 'text-[#c4c4c4]'} ${className}`}>
    <svg viewBox="0 0 64 18" preserveAspectRatio="none" className="absolute inset-0 h-full w-full" aria-hidden="true">
      <path d="M0 0h64c-5 3-3 18-11 18H11C3 18 5 3 0 0z" fill={active ? '#868686' : '#575757'} />
    </svg>
    <span className="relative">{children}</span>
  </button>
);

const StatusBar = () => (
  <div className="flex h-[29px] items-start bg-[#393939] pl-2">
    <LayoutTab active className="w-16">Model</LayoutTab>
    <LayoutTab className="-ml-1 w-[67px]">Layout1</LayoutTab>
    <LayoutTab className="-ml-1 w-[70px]">Layout2</LayoutTab>
    <button type="button" aria-label="New layout" className="mt-px ml-[2px] flex h-4 w-[22px] items-center justify-center rounded-tl-lg rounded-br-lg bg-[#555]">
      <svg viewBox="0 0 8 8" className="size-2"><path d="M4 0v8M0 4h8" stroke="#bbb" strokeWidth="1.5" /></svg>
    </button>
    <span className="flex-1" />
    <div className="flex h-[27px] text-xs text-white [&>*]:flex [&>*]:items-center [&>*]:justify-center [&>*]:border [&>*]:border-[#777] [&>*]:bg-[#4b4b4b]">
      <button type="button" className="w-[51px]">MODEL</button>
      <div className="w-[66px] gap-[7px]"><Icon name="grid" /><Icon name="snap" /><Caret /></div>
      <div className="w-[25px]"><Icon name="infer" /></div>
      <div className="w-[25px]"><Icon name="dyn" /></div>
      <div className="w-[66px] gap-[8px]"><Icon name="ortho" /><Icon name="polar" /><Caret /></div>
      <div className="w-[25px]"><Icon name="iso" size="size-[18px]" /></div>
      <div className="w-11 gap-[10px]"><Icon name="gear" size="size-[14px]" /><Caret /></div>
      <div className="w-[26px]"><Icon name="shapes" /></div>
      <div className="w-7"><Icon name="perf" size="size-[18px]" /></div>
      <div className="w-[33px]"><Icon name="graph" size="size-[18px]" /></div>
      <div className="w-[51px] gap-2"><Icon name="full" /><Icon name="menu" /></div>
    </div>
  </div>
);

const Chrome = () => (
  <svg viewBox="0 0 24 24" className="size-[22px]" aria-hidden="true">
    <circle cx="12" cy="12" r="11.5" fill="#fbc52d" />
    <path d="M2 6.500A11.500 11.500 0 0 1 22 6.500H12L7 15z" fill="#db4a3c" />
    <path d="M2 6.500A11.500 11.500 0 0 0 11 23.500l5-8.500-9-1z" fill="#2ba24c" />
    <circle cx="12" cy="12" r="5.3" fill="#fff" /><circle cx="12" cy="12" r="4.2" fill="#4a86ee" />
  </svg>
);

const apps = [
  ['Task view', <svg viewBox="0 0 20 16" className="h-4 w-5" fill="none" stroke="#fff" strokeWidth="1.2"><path d="M4.500 1.500h11v13h-11zM3 3.500H1v9h2M17 3.500h2v9h-2" /></svg>],
  ['Store', <svg viewBox="0 0 22 24" className="h-6 w-[22px]"><path d="M1 7l20-2v18L1 20z" fill="#fff" /><path d="M6 7c0-7 8-7 9-1" fill="none" stroke="#fff" strokeWidth="1.5" /><path d="M5 10l5-.5v4H5zM11 9.500l5-.5v4.500h-5zM5 14.500h5v4l-5-.5zM11 14.500h5v5l-5-.6z" fill="#05070c" /></svg>],
  ['File Explorer', <svg viewBox="0 0 22 20" className="h-5 w-[22px]"><path d="M1 1h8l2 2h10v15H1z" fill="#f8dc82" /><path d="M4 10h14v9h-3v-4H7v4H4z" fill="#4ba3cf" /></svg>],
  ['Edge', <svg viewBox="0 0 22 22" className="size-[22px]"><path d="M1 10C2 3 7 1 11 1c6 0 9.500 4 9.500 9v3H7.500c0 6 7 6 12 3v4C12 24 3 21 3 13c0-4 3-6 5-7-1 1-1.500 2-1.500 3.500H15C15 3 6 3 1 10z" fill="#1476d2" /></svg>],
  ['Chrome', <Chrome />],
  ['Screen capture', <svg viewBox="0 0 24 24" className="size-6" fill="none" stroke="#fff" strokeWidth="1.5"><rect width="24" height="24" rx="3" fill="#2f8be6" stroke="none" /><path d="M4 8V5h4M16 5h4v3M20 16v3h-4M8 19H4v-3M9 8v8M15 8v8M7 9.500h10M7 15h10" /></svg>],
  ['Mail', <svg viewBox="0 0 24 20" className="h-5 w-6"><path d="M0 6l12-6 12 6v14H0z" fill="#fff" /><path d="M1 6.500h22l-11 5 3 5L1 7z" fill="#05070c" /></svg>],
  ['Sticky Notes', <svg viewBox="0 0 20 20" className="size-[19px]"><path d="M0 1h19v10l-8 8H0z" fill="#f6e89b" /><path d="M19 11h-8v8z" fill="#6b663f" /></svg>, 'run'],
  ['AutoCAD', <svg viewBox="0 0 24 24" className="size-6"><path d="M0 0h24v24H0z" fill="#fae5e0" /><path d="M4 21L9 3h6l5 18h-4l-1.500-5h-5L8 21zM10 13h4l-2-7z" fill="#b3202a" /></svg>, 'active'],
  ['Chrome 2', <Chrome />, 'run'],
  ['Paint', <svg viewBox="0 0 24 24" className="size-6"><path d="M1 14C2 6 12 3 19 7c4 3 2 8-2 11-3 3-5 1-6 3-2 2-5 0-4-3-1-2-3 1-6-4z" fill="#dfe9f2" stroke="#9bb" strokeWidth=".5" /><circle cx="7" cy="11" r="1.8" fill="#4ba34b" /><circle cx="12" cy="8.5" r="1.7" fill="#e0b23a" /><circle cx="5" cy="15" r="1.3" fill="#333" /><circle cx="16" cy="10" r="1.7" fill="#3a74c9" /><path d="M13 22L20 3" stroke="#d3a262" strokeWidth="2.5" /><path d="M18 4l3-4 2 2-1 4z" fill="#ecd5a5" /></svg>, 'run'],
];

const Taskbar = () => (
  <div className="flex h-10 items-stretch bg-[#03060b] text-white">
    <button type="button" aria-label="Start" className="flex w-[46px] items-center justify-center">
      <svg viewBox="0 0 16 16" className="size-4"><path d="M0 2.300L6.500 1.400v6.100H0zM7.300 1.300L16 0v7.500H7.300zM0 8.300h6.500v6.200L0 13.600zM7.300 8.300H16V16l-8.700-1.300z" fill="#fff" /></svg>
    </button>
    <div className="flex w-[333px] items-center bg-[#333] pr-[2px] pl-[11px]">
      <svg viewBox="0 0 22 22" className="size-[22px]" aria-hidden="true"><circle cx="11" cy="11" r="9" fill="none" stroke="#fff" strokeWidth="2.5" /></svg>
      <input aria-label="Search" placeholder="Type here to search" className="ml-[9px] min-w-0 flex-1 bg-transparent text-sm placeholder:text-[#a3a3a3]" />
      <svg viewBox="0 0 12 18" className="h-[18px] w-3" fill="none" stroke="#ccc" aria-hidden="true"><path d="M3.500 1h5v10h-5zM1 8v5.500h10V8M6 13.500V17" /></svg>
    </div>
    <div className="ml-[15px] flex gap-px">
      {apps.map(([n, art, state]) => (
        <button key={n} type="button" aria-label={n}
          className={`flex w-12 items-center justify-center border-b-2 pt-[2px] ${state === 'active' ? 'border-[#a5cbf0] bg-[#33363b]' : state === 'run' ? 'border-[#a5cbf0]' : 'border-transparent'}`}>
          {art}
        </button>
      ))}
    </div>
    <div className="ml-auto flex items-center text-[11px]">
      <svg viewBox="0 0 12 8" className="h-2 w-3" fill="none" stroke="#fff" strokeWidth="1.3"><path d="M1 7l5-5 5 5" /></svg>
      <svg viewBox="0 0 14 14" className="ml-3 size-[14px]" fill="none" stroke="#ddd"><path d="M2 13C2 7 6 2 13 2M5 13c0-5 3-8 8-8M8 13c0-3 2-5 5-5" /><circle cx="12" cy="12" r="1.5" fill="#fff" /></svg>
      <svg viewBox="0 0 16 10" className="ml-[9px] h-[10px] w-4"><path d="M.5 1.500h13v7H.5zM14 4h1.500v2.500H14" fill="none" stroke="#fff" /><path d="M2 3h7v4H2z" fill="#fff" /></svg>
      <svg viewBox="0 0 17 14" className="ml-[7px] h-[14px] w-[17px]" fill="none" stroke="#fff"><path d="M.5 5h2.500l3-3v10L3 9H.5zM8.500 5q1 2 0 4M11 3q2.500 4 0 8M13.500 1.500q4 5.500 0 11" /></svg>
      <span className="ml-[10px] w-6">ENG</span>
      <div className="ml-[7px] w-[66px] text-center leading-[18px]"><div>22:09</div><div>04-09-2017</div></div>
      <button type="button" aria-label="Notifications" className="mr-[15px] ml-[14px]">
        <svg viewBox="0 0 17 17" className="size-[17px]" fill="none" stroke="#fff" strokeWidth="1.3"><path d="M1 1.500h15v11h-4.500L8.500 16v-3.500H1z" /></svg>
      </button>
      <span className="mr-2 h-10 w-px bg-[#444]" />
    </div>
  </div>
);

const App = () => (
  <div className="flex h-screen flex-col overflow-hidden bg-[#5b5b5b] font-['Noto_Sans','Open_Sans',sans-serif]">
    <header className="flex">
      <button type="button" aria-label="Application menu" className="flex h-[41px] w-[41px] shrink-0 items-center justify-center border border-black bg-linear-to-b from-[#bcbcbc] to-[#7b7b7b]">
        <svg viewBox="0 0 38 38" className="size-[38px]">
          <path d="M4 28L12 3h8l7 24-5 1-3-8-8 2-3 7zM12 16l5-1-2-8z" fill="#d22f33" />
          <path d="M4 28L12 3l4 1L8 29z" fill="#a5181f" /><path d="M30 17h7l-3 4z" fill="#333" />
        </svg>
      </button>
      <div className="min-w-0 flex-1">
        <TitleBar />
        <MenuBar />
      </div>
    </header>
    <DocTabs />
    <Toolbars />
    <Workspace />
    <CommandLine />
    <StatusBar />
    <Taskbar />
  </div>
);

export default App;
